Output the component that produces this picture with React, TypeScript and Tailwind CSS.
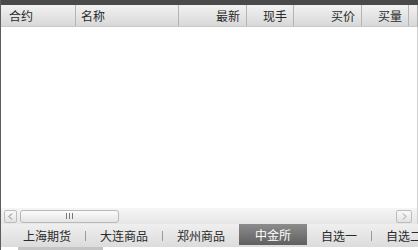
import React from 'react';

const columns = [
  { name: '合约', width: 'w-[75px]', align: 'justify-start pl-[8px]' },
  { name: '名称', width: 'w-[103px]', align: 'justify-start pl-[5px]' },
  { name: '最新', width: 'w-[68px]', align: 'justify-end pr-[6px]' },
  { name: '现手', width: 'w-[47px]', align: 'justify-end pr-[6px]' },
  { name: '买价', width: 'w-[68px]', align: 'justify-end pr-[6px]' },
  { name: '买量', width: 'w-[47px]', align: 'justify-end pr-[6px]' },
];

const tabs = ['上海期货', '大连商品', '郑州商品', '中金所', '自选一', '自选二'];
const activeTab = '中金所';

const Sep = () => <div className="w-px h-[10px] bg-[#9a9a9a] shrink-0" />;

const App: React.FC = () => {
  return (
    <div
      className="w-[418px] h-[250px] flex flex-col bg-white overflow-hidden border-l border-[#5c5c5c] text-[12px] text-[#2a2a2a]"
      style={{ fontFamily: '"Noto Sans CJK SC", "Noto Sans", sans-serif' }}
    >
      {/* top dark strip */}
      <div className="h-[5px] bg-[#4a4a4a] shrink-0" />

      {/* header */}
      <div className="h-[22px] shrink-0 flex items-center bg-gradient-to-b from-[#f2f2f2] to-[#d8d8d8] border-b border-[#c8c8c8] border-r border-r-[#b0b0b0]">
        {columns.map((col) => (
          <div
            key={col.name}
            className={`${col.width} h-full flex items-center pt-px ${col.align} border-r border-[#b4b4b4] leading-none`}
          >
            {col.name}
          </div>
        ))}
        <div className="flex-1" />
      </div>

      {/* body */}
      <div className="flex-1 bg-white border-r border-[#d0d0d0]" />

      {/* horizontal scrollbar */}
      <div className="h-[16px] shrink-0 flex items-center gap-[2px] px-[3px] bg-gradient-to-b from-[#f6f6f6] to-[#e6e6e6] border-r border-[#d0d0d0]">
        <div className="w-[13px] h-[13px] rounded-[2px] border border-[#bcbcbc] bg-gradient-to-b from-[#fafafa] to-[#e2e2e2] flex items-center justify-center">
          <svg width="5" height="7" viewBox="0 0 5 7">
            <path d="M4 0.5 L1 3.5 L4 6.5" fill="none" stroke="#777" strokeWidth="1" />
          </svg>
        </div>
        <div className="w-[99px] h-[13px] rounded-[3px] border border-[#b8b8b8] bg-gradient-to-b from-[#fcfcfc] to-[#e4e4e4] flex items-center justify-center gap-[2px] ml-[1px]">
          <div className="w-px h-[6px] bg-[#777]" />
          <div className="w-px h-[6px] bg-[#777]" />
          <div className="w-px h-[6px] bg-[#777]" />
        </div>
        <div className="flex-1" />
        <div className="w-[16px] h-[13px] rounded-[2px] border border-[#bcbcbc] bg-gradient-to-b from-[#fafafa] to-[#e2e2e2] flex items-center justify-center mr-[2px]">
          <svg width="5" height="7" viewBox="0 0 5 7">
            <path d="M1 0.5 L4 3.5 L1 6.5" fill="none" stroke="#999" strokeWidth="1" />
          </svg>
        </div>
      </div>

      {/* tabs */}
      <div className="h-[23px] shrink-0 flex items-center pl-[8px] bg-gradient-to-b from-[#efefef] to-[#dcdcdc] text-[12px] whitespace-nowrap">
        {tabs.map((tab, i) => {
          const isActive = tab === activeTab;
          const next = tabs[i + 1];
          const showSep = next && !isActive && next !== activeTab;
          return (
            <React.Fragment key={tab}>
              {isActive ? (
                <div className="h-[21px] self-start flex items-center px-[16px] bg-gradient-to-b from-[#8c8c8c] to-[#606060] text-white leading-none">
                  {tab}
                </div>
              ) : (
                <div className="h-full flex items-center px-[14px] leading-none">{tab}</div>
              )}
              {showSep && <Sep />}
            </React.Fragment>
          );
        })}
      </div>

      {/* bottom strip */}
      <div className="h-[3px] shrink-0 bg-white pl-[17px]">
        <div className="w-[85px] h-full bg-[#c4c4c4]" />
      </div>
    </div>
  );
};

export default App;
